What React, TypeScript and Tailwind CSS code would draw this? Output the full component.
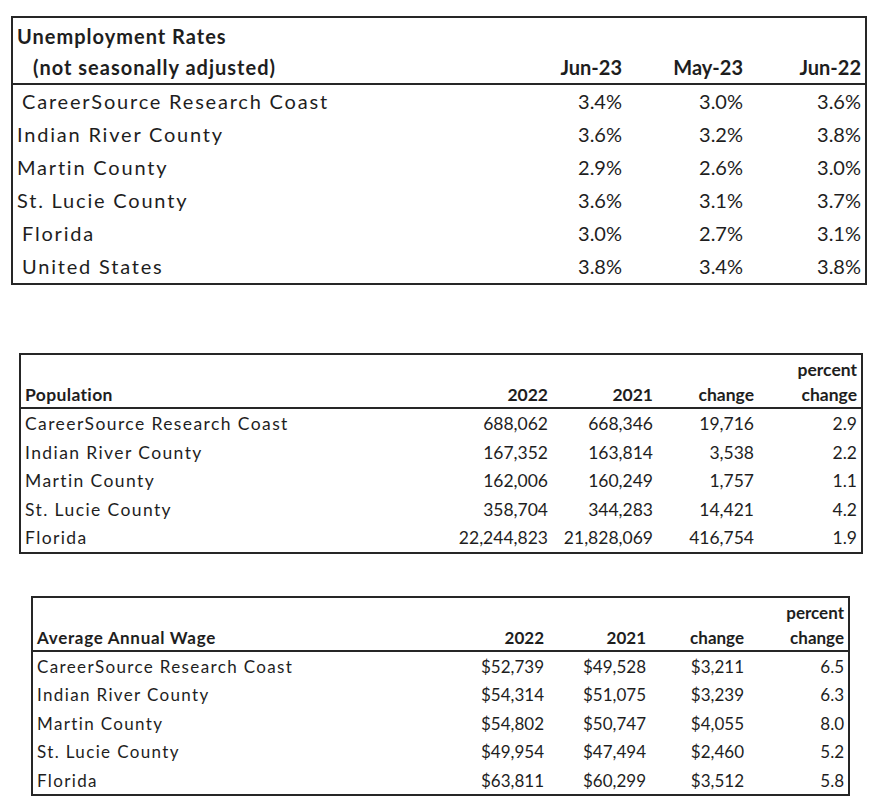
const rates = [
  { name: 'CareerSource Research Coast', indent: true, v: ['3.4%', '3.0%', '3.6%'] },
  { name: 'Indian River County', indent: false, v: ['3.6%', '3.2%', '3.8%'] },
  { name: 'Martin County', indent: false, v: ['2.9%', '2.6%', '3.0%'] },
  { name: 'St. Lucie County', indent: false, v: ['3.6%', '3.1%', '3.7%'] },
  { name: 'Florida', indent: true, v: ['3.0%', '2.7%', '3.1%'] },
  { name: 'United States', indent: true, v: ['3.8%', '3.4%', '3.8%'] },
]

const population = [
  ['CareerSource Research Coast', '688,062', '668,346', '19,716', '2.9'],
  ['Indian River County', '167,352', '163,814', '3,538', '2.2'],
  ['Martin County', '162,006', '160,249', '1,757', '1.1'],
  ['St. Lucie County', '358,704', '344,283', '14,421', '4.2'],
  ['Florida', '22,244,823', '21,828,069', '416,754', '1.9'],
]

const wages = [
  ['CareerSource Research Coast', '$52,739', '$49,528', '$3,211', '6.5'],
  ['Indian River County', '$54,314', '$51,075', '$3,239', '6.3'],
  ['Martin County', '$54,802', '$50,747', '$4,055', '8.0'],
  ['St. Lucie County', '$49,954', '$47,494', '$2,460', '5.2'],
  ['Florida', '$63,811', '$60,299', '$3,512', '5.8'],
]

function Unemployment() {
  return (
    <div className="ml-[11px] mt-[16px] w-[856px] border-2 border-[#262626] text-[20px]">
      <div className="grid grid-cols-[1fr_100px_121px_118px] pr-[4px] pt-[2px] font-bold">
        <div className="h-[32px] leading-[32px] pl-[4px] col-span-4 tracking-[0.05em]">Unemployment Rates</div>
        <div className="h-[31px] leading-[31px] pl-[20px] tracking-[0.05em]">(not seasonally adjusted)</div>
        <div className="text-right leading-[31px]">Jun-23</div>
        <div className="text-right leading-[31px]">May-23</div>
        <div className="text-right leading-[31px]">Jun-22</div>
      </div>
      <div className="border-t-2 border-[#262626]">
        {rates.map((r) => (
          <div key={r.name} className="grid grid-cols-[1fr_100px_121px_118px] pr-[4px] h-[33px] leading-[33px]">
            <div className={`tracking-[0.09em] ${r.indent ? 'pl-[9px]' : 'pl-[4px]'}`}>{r.name}</div>
            {r.v.map((x, i) => (
              <div key={i} className="text-right">{x}</div>
            ))}
          </div>
        ))}
      </div>
    </div>
  )
}

function DataTable({
  title,
  rows,
  cols,
  className,
  titleClass,
}: {
  title: string
  rows: string[][]
  cols: string
  className: string
  titleClass: string
}) {
  return (
    <div className={`border-2 border-[#262626] ${className}`}>
      <div className={`grid ${cols} pr-[4px] pt-[2px] font-bold`}>
        <div className="h-[25px]" />
        <div />
        <div />
        <div />
        <div className="text-right leading-[25px]">percent</div>
        <div className={`pl-[4px] leading-[25px] ${titleClass}`}>{title}</div>
        <div className="text-right leading-[25px]">2022</div>
        <div className="text-right leading-[25px]">2021</div>
        <div className="text-right leading-[25px]">change</div>
        <div className="text-right leading-[25px]">change</div>
      </div>
      <div className="border-t-2 border-[#262626]">
        {rows.map((r) => (
          <div key={r[0]} className={`grid ${cols} pr-[4px] pt-[2px] h-[28.5px] leading-[26.5px]`}>
            <div className="pl-[4px] tracking-[0.08em]">{r[0]}</div>
            {r.slice(1).map((x, i) => (
              <div key={i} className="text-right">{x}</div>
            ))}
          </div>
        ))}
      </div>
    </div>
  )
}

export default function App() {
  return (
    <div className="w-[880px] h-[807px] bg-white text-[#1e1e1e] font-['Lato',sans-serif] overflow-hidden">
      <Unemployment />
      <DataTable
        title="Population"
        titleClass="tracking-[0.02em]"
        rows={population}
        cols="grid-cols-[1fr_100px_105px_101px_103px]"
        className="ml-[19px] mt-[68px] w-[844px] text-[17.5px]"
      />
      <DataTable
        title="Average Annual Wage"
        titleClass="tracking-[0.04em]"
        rows={wages}
        cols="grid-cols-[1fr_100px_102px_98px_100px]"
        className="ml-[31px] mt-[42px] w-[819px] text-[17px]"
      />
    </div>
  )
}
